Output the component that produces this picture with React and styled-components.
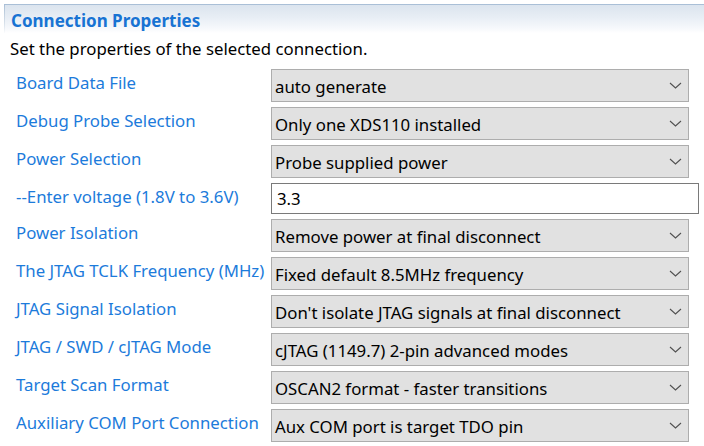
import React from 'react';
import styled, { createGlobalStyle } from 'styled-components';

const GlobalStyle = createGlobalStyle`
  html, body { margin: 0; padding: 0; background: #ffffff; }
  body { font-family: "Noto Sans", "Open Sans", sans-serif; font-size: 16.8px; color: #000; }
`;

const Page = styled.div`
  width: 704px;
  height: 446px;
  overflow: hidden;
  padding-top: 4px;
  box-sizing: border-box;
`;

const Header = styled.div`
  margin-left: 4px;
  padding: 4px 0 0 6px;
  border-style: solid;
  border-width: 1px 0 0 1px;
  border-image: linear-gradient(to bottom, #a8bed6 0%, #c8d5e2 40%, rgba(220, 228, 236, 0) 100%) 1;
  background: linear-gradient(to bottom, #dbe4ee 0%, #e8eef5 45%, #f7f9fc 85%, #ffffff 100%);
`;

const Title = styled.h1`
  margin: 0;
  font-size: 17px;
  font-weight: 700;
  line-height: 24px;
  color: #1873d3;
`;

const Description = styled.p`
  margin: 0;
  padding: 4px 0 0 10px;
  line-height: 24px;
`;

const Form = styled.div`
  display: grid;
  grid-template-columns: 255px 428px;
  row-gap: 5px;
  margin: 8px 0 0 16px;
`;

const Label = styled.div`
  color: #1c7bdb;
  line-height: 24px;
  padding-top: 2px;
  white-space: nowrap;
`;

const Combo = styled.div`
  width: 418px;
  height: 33px;
  box-sizing: border-box;
  display: flex;
  align-items: center;
  justify-content: space-between;
  padding: 2px 6px 0 3px;
  background: #e1e1e1;
  border: 1px solid #adadad;
  line-height: 29px;
  white-space: nowrap;
`;

const Chevron = styled.svg`
  width: 13px;
  height: 7px;
  flex: none;
  margin-bottom: 2px;
`;

const TextField = styled.div`
  width: 428px;
  height: 31px;
  box-sizing: border-box;
  padding: 1px 6px 0 5px;
  background: #ffffff;
  border: 1px solid #7a7a7a;
  line-height: 28px;
`;

const rows = [
  { label: 'Board Data File', value: 'auto generate' },
  { label: 'Debug Probe Selection', value: 'Only one XDS110 installed' },
  { label: 'Power Selection', value: 'Probe supplied power' },
  { label: '--Enter voltage (1.8V to 3.6V)', value: '3.3', text: true },
  { label: 'Power Isolation', value: 'Remove power at final disconnect' },
  { label: 'The JTAG TCLK Frequency (MHz)', value: 'Fixed default 8.5MHz frequency' },
  { label: 'JTAG Signal Isolation', value: "Don't isolate JTAG signals at final disconnect" },
  { label: 'JTAG / SWD / cJTAG Mode', value: 'cJTAG (1149.7) 2-pin advanced modes' },
  { label: 'Target Scan Format', value: 'OSCAN2 format - faster transitions' },
  { label: 'Auxiliary COM Port Connection', value: 'Aux COM port is target TDO pin' },
];

function DownArrow() {
  return (
    <Chevron viewBox="0 0 13 7">
      <path d="M1 1 L6.5 6 L12 1" fill="none" stroke="#505050" strokeWidth="1.1" />
    </Chevron>
  );
}

export default function App() {
  return (
    <Page>
      <GlobalStyle />
      <Header>
        <Title>Connection Properties</Title>
      </Header>
      <Description>Set the properties of the selected connection.</Description>
      <Form>
        {rows.map((r) => (
          <React.Fragment key={r.label}>
            <Label>{r.label}</Label>
            {r.text ? (
              <TextField>{r.value}</TextField>
            ) : (
              <Combo>
                <span>{r.value}</span>
                <DownArrow />
              </Combo>
            )}
          </React.Fragment>
        ))}
      </Form>
    </Page>
  );
}
